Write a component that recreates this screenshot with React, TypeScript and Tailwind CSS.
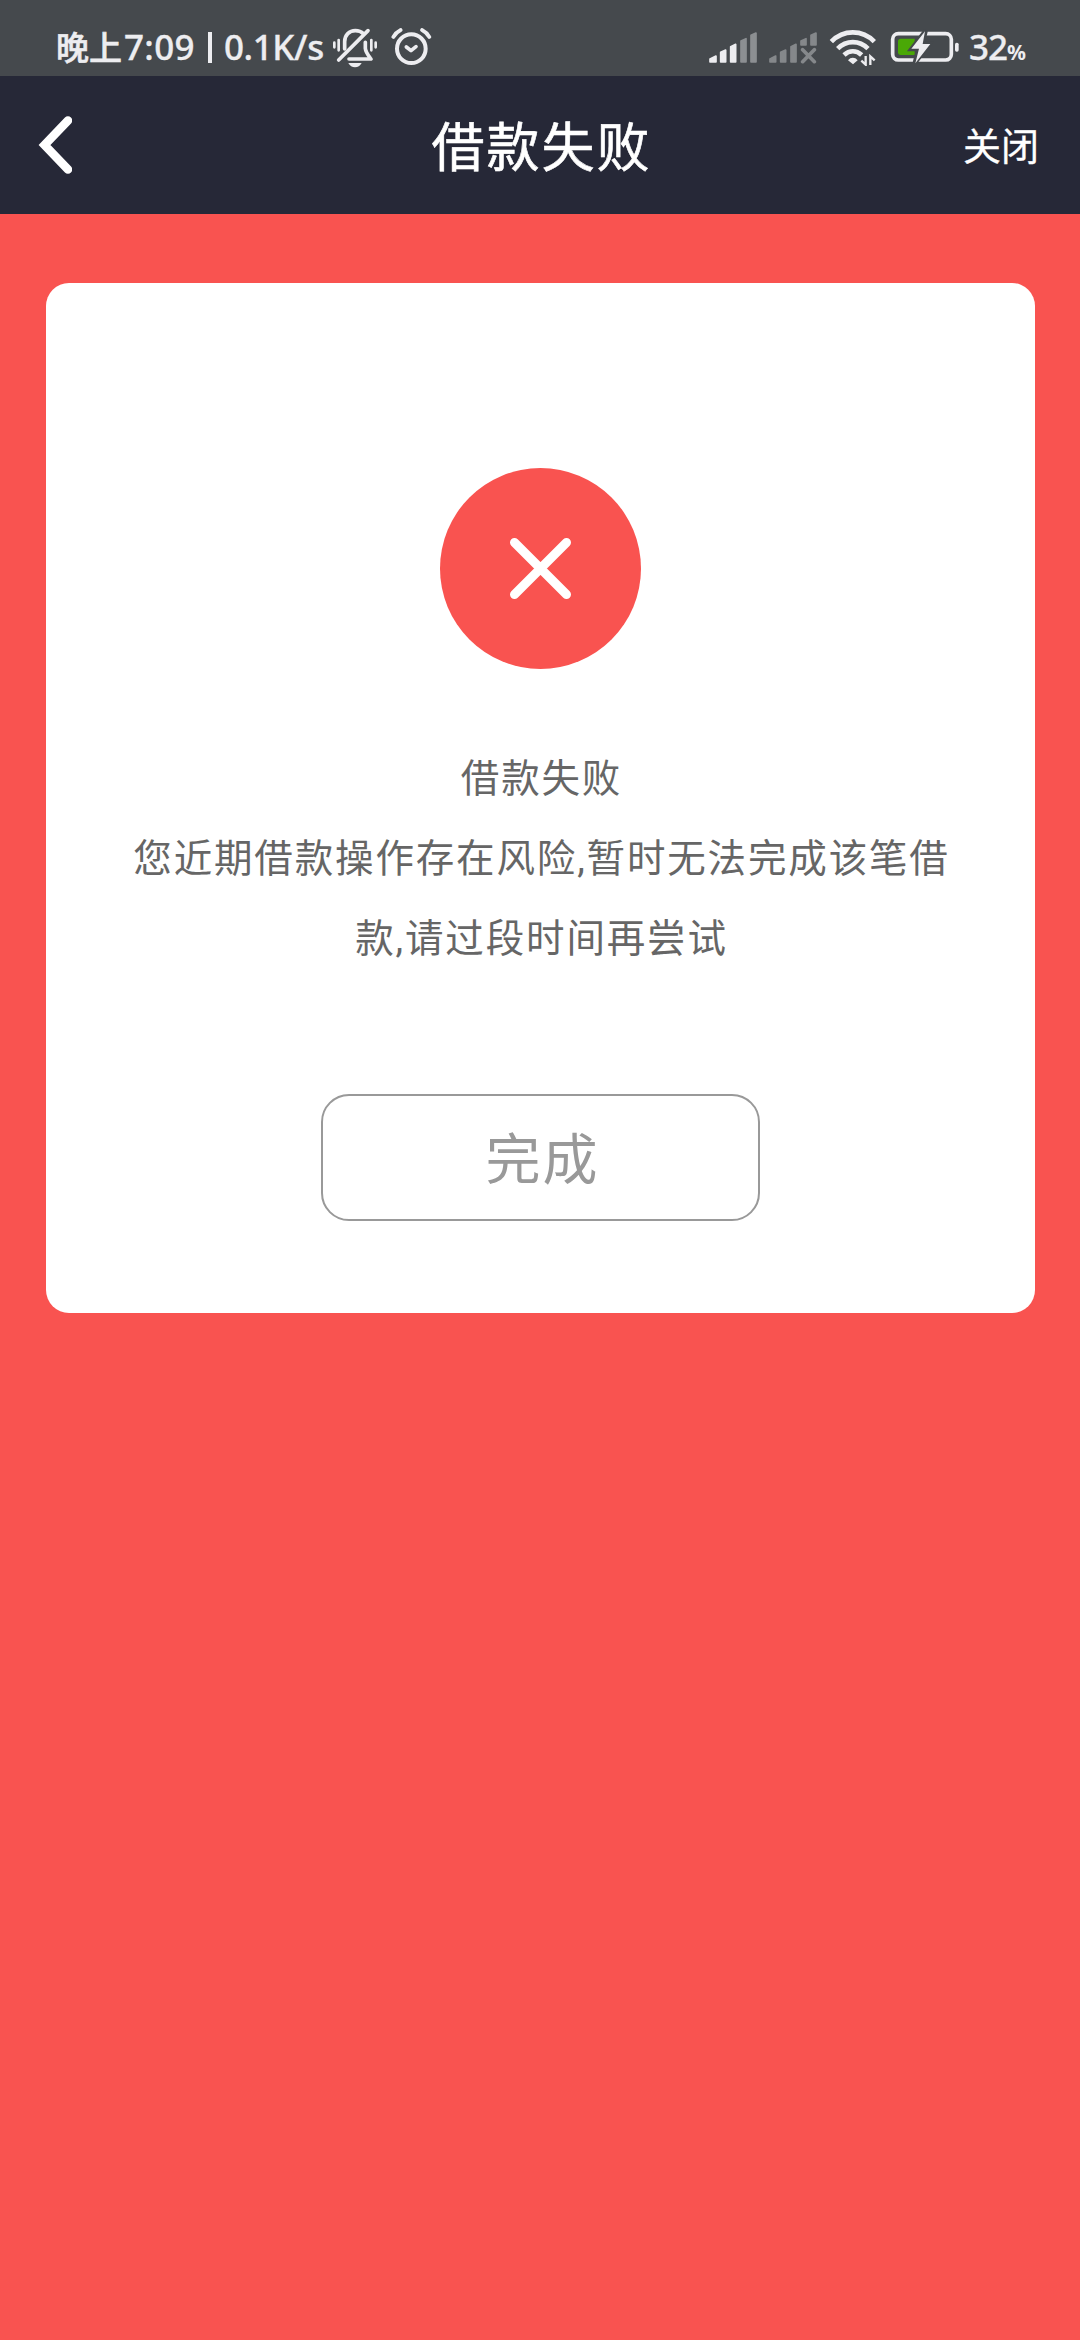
function BellOffIcon() {
  return (
    <svg viewBox="33 36 138 126" className="h-[42px] w-[46px]" fill="none" stroke="#ededf0" strokeLinecap="round">
      <path d="M71 102V80C71 60 85 47 103 47C113 47 121 50 127 56" strokeWidth={11} />
      <path d="M53 135L141 47" strokeWidth={11} />
      <path d="M133 82V100C134 112 142 121 150 132H84" strokeWidth={11} strokeLinejoin="round" />
      <path d="M40 83V97M53 75V106M151 75V106M164 83V97" strokeWidth={8} />
      <path d="M82 144H122C118 152 110 157 102 157C94 157 86 152 82 144Z" fill="#ededf0" stroke="none" />
    </svg>
  );
}

function AlarmIcon() {
  return (
    <svg viewBox="210 36 123 120" className="h-[40px] w-[41px]" fill="none" stroke="#ededf0" strokeLinecap="round">
      <circle cx={271} cy={101} r={43} strokeWidth={12} />
      <path d="M256 96L270 107L285 95" strokeWidth={11} strokeLinejoin="round" />
      <path d="M217 66C222 57 229 50 239 45M303 45C313 50 320 57 325 66" strokeWidth={11} />
    </svg>
  );
}

function SignalIcon() {
  return (
    <svg viewBox="57 48 144 99" className="h-[33px] w-[48px]" strokeLinejoin="round" strokeWidth={5}>
      <g fill="#ededf0" stroke="#ededf0">
        <path d="M60 132L78 123V141H60Z" />
        <path d="M92 112L107 105V141H92Z" />
        <path d="M122 95L137 88V141H122Z" />
      </g>
      <g fill="#8c8f92" stroke="#8c8f92">
        <path d="M153 78L168 71V141H153Z" />
        <path d="M183 61L198 54V141H183Z" />
      </g>
    </svg>
  );
}

function NoSignalIcon() {
  return (
    <svg viewBox="237 48 147 99" className="h-[33px] w-[49px]" fill="#85888b" stroke="#85888b" strokeLinejoin="round" strokeWidth={5}>
      <path d="M240 132L257 123V141H240Z" />
      <path d="M272 112L287 105V141H272Z" />
      <path d="M303 95L318 88V141H303Z" />
      <path d="M333 78L348 71V90H333Z" />
      <path d="M363 61L378 54V90H363Z" />
      <path d="M338 104L373 140M373 104L338 140" strokeWidth={11} strokeLinecap="round" />
    </svg>
  );
}

function WifiIcon() {
  return (
    <svg viewBox="417 42 144 111" className="h-[37px] w-[48px]" fill="none" stroke="#ededf0">
      <path d="M424 80C460 43 517 43 553 80" strokeWidth={14} />
      <path d="M443 101C469 75 508 75 534 101" strokeWidth={14} />
      <path d="M462 120C478 105 499 105 515 120" strokeWidth={14} />
      <path d="M474 136C482 126 495 126 503 136L489 148Z" fill="#ededf0" stroke="none" />
      <path d="M527 123V149L514 137M541 150V124L554 136" strokeWidth={7} />
    </svg>
  );
}

function BatteryIcon() {
  return (
    <svg viewBox="60 42 210 105" className="h-[35px] w-[70px]">
      <rect x={68} y={56} width={176} height={79} rx={17} fill="none" stroke="#ededf0" strokeWidth={11} />
      <path d="M92 71H134V120H92C87 120 84 117 84 112V79C84 74 87 71 92 71Z" fill="#4aa806" />
      <path d="M167 47L124 102H145L134 145L179 86H158Z" fill="#ededf0" stroke="#45494d" strokeWidth={13} />
      <path d="M165 49L124 101H147L136 145L181 87H158Z" fill="#ededf0" />
      <rect x={255} y={83} width={11} height={27} rx={5} fill="#ededf0" />
    </svg>
  );
}

function StatusBar() {
  return (
    <div className="flex h-[76px] items-center bg-[#45494d] pt-[18px] text-[#ededf0]">
      <div className="ml-[56px] flex h-[58px] w-[276px] items-center whitespace-nowrap font-['Noto_Sans','Noto_Sans_CJK_SC',sans-serif] text-[35px] leading-none font-medium">
        <span className="w-[68px] text-[33px] [-webkit-text-stroke:0.600px]">晚上</span>
        <span className="-mt-[2px] w-[84px] tracking-[0.300px] [-webkit-text-stroke:0.300px]">7:09</span>
        <span className="h-[31px] w-[4px] bg-[#ededf0]" />
        <span className="-mt-[2px] ml-[12px] tracking-[-0.400px] [-webkit-text-stroke:0.300px]">0.1K/s</span>
      </div>
      <div className="flex h-[58px] items-start pt-[9px]">
        <BellOffIcon />
        <div className="ml-[13px]">
          <AlarmIcon />
        </div>
      </div>
      <div className="ml-auto flex h-[58px] items-start pt-[13px]">
        <SignalIcon />
        <div className="ml-[12px]">
          <NoSignalIcon />
        </div>
        <div className="-mt-[2px] ml-[11px]">
          <WifiIcon />
        </div>
        <div className="-mt-[2px] ml-[13px]">
          <BatteryIcon />
        </div>
      </div>
      <div className="ml-[9px] flex h-[58px] w-[111px] items-baseline pt-[11px] font-['Noto_Sans',sans-serif] leading-none font-medium">
        <span className="text-[35px] tracking-[-1px] [-webkit-text-stroke:0.300px]">32</span>
        <span className="text-[21px] font-bold">%</span>
      </div>
    </div>
  );
}

function Header() {
  return (
    <header className="grid h-[138px] grid-cols-[1fr_auto_1fr] items-center bg-[#262837] text-white">
      <button className="ml-[38px] w-fit" aria-label="返回">
        <svg viewBox="0 0 34 58" className="h-[58px] w-[34px]" fill="none" stroke="white" strokeWidth={8.5}>
          <path d="M30 4.500L6.500 29L30 53.500" strokeLinecap="round" strokeLinejoin="miter" />
        </svg>
      </button>
      <h1 className="-mt-[2px] pl-[3px] text-[53px] leading-none tracking-[2px] [-webkit-text-stroke:0.600px]">借款失败</h1>
      <button className="-mt-[2px] mr-[41px] justify-self-end text-[38px] leading-none [-webkit-text-stroke:0.300px]">关闭</button>
    </header>
  );
}

export default function App() {
  return (
    <div className="flex h-[2340px] w-[1080px] flex-col bg-[#f95350] font-['Noto_Sans_CJK_SC',sans-serif]">
      <StatusBar />
      <Header />
      <main className="mt-[69px] mr-[45px] ml-[46px] flex h-[1030px] flex-col items-center rounded-[23px] bg-white pt-[185px]">
        <svg viewBox="0 0 201 201" className="size-[201px]">
          <circle cx={100.5} cy={100.5} r={100.5} fill="#f95350" />
          <path d="M74.500 74.500L126.500 126.500M126.500 74.500L74.500 126.500" stroke="white" strokeWidth={9} strokeLinecap="round" />
        </svg>
        <div className="mt-[70px] pl-[2px] text-center font-['Roboto','Noto_Sans_CJK_SC',sans-serif] text-[38.500px] leading-[80px] tracking-[1.850px] text-[#666]">
          <p>借款失败</p>
          <p>
            您近期借款操作存在风险,暂时无法完成该笔借
            <br />
            款,请过段时间再尝试
          </p>
        </div>
        <button className="mt-[115px] h-[127px] w-[439px] rounded-[28px] border-2 border-[#999] pb-[4px] pl-[4px] text-[55px] leading-none tracking-[2px] text-[#999]">
          完成
        </button>
      </main>
    </div>
  );
}
